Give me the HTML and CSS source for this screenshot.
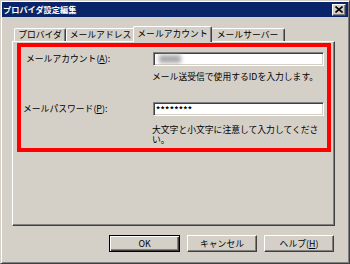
FILE: index.html
```html
<!DOCTYPE html>
<html lang="ja">
<head>
<meta charset="utf-8">
<title>プロバイダ設定編集</title>
<link rel="stylesheet" href="styles.css">
</head>
<body>
<div class="window">
  <div class="titlebar">
    <span class="title">プロバイダ設定編集</span>
    <span class="close">
      <svg width="8" height="7" viewBox="0 0 8 7"><path d="M0.5 0.5 L7.5 6.5 M7.5 0.5 L0.5 6.5" stroke="#000" stroke-width="1.6" fill="none"/></svg>
    </span>
  </div>
  <div class="content">
    <div class="tabs">
      <div class="tab t1">プロバイダ</div>
      <div class="tab t2">メールアドレス</div>
      <div class="tab t3 active">メールアカウント</div>
      <div class="tab t4">メールサーバー</div>
    </div>
    <div class="panel">
      <div class="highlight">
        <div class="row row1">
          <span class="label l1">メールアカウント(<u>A</u>):</span>
          <span class="input"><span class="blurred"></span></span>
        </div>
        <div class="hint hint1">メール送受信で使用するIDを入力します。</div>
        <div class="row row2">
          <span class="label l2">メールパスワード(<u>P</u>):</span>
          <span class="input pw">********</span>
        </div>
        <div class="hint hint2">大文字と小文字に注意して入力してください。</div>
      </div>
    </div>
    <div class="buttons">
      <div class="btn default"><span>OK</span></div>
      <div class="btn"><span>キャンセル</span></div>
      <div class="btn"><span>ヘルプ(<u>H</u>)</span></div>
    </div>
  </div>
</div>
</body>
</html>
```
FILE: styles.css
```css
html, body {
  margin: 0;
  padding: 0;
  background: #d4d0c8;
}
body {
  font-family: "Noto Sans CJK JP", "Noto Sans", sans-serif;
  font-size: 8.8px;
  color: #000;
}
.window {
  width: 350px;
  height: 264px;
  box-sizing: border-box;
  background: #d4d0c8;
  border-top: 1px solid #d4d0c8;
  border-left: 1px solid #d4d0c8;
  border-right: 1px solid #404040;
  border-bottom: 1px solid #404040;
  box-shadow: inset 1px 1px #fff, inset -1px -1px #808080;
  padding: 1px;
  display: flex;
  flex-direction: column;
}
.titlebar {
  height: 15px;
  background: #0a246a;
  display: flex;
  align-items: center;
  justify-content: space-between;
  padding: 0 2px 0 1px;
}
.title {
  color: #fff;
  font-weight: bold;
  font-size: 8.2px;
  line-height: 15px;
  letter-spacing: 0;
}
.close {
  width: 14px;
  height: 12px;
  box-sizing: border-box;
  background: #d4d0c8;
  border-top: 1px solid #fff;
  border-left: 1px solid #fff;
  border-right: 1px solid #404040;
  border-bottom: 1px solid #404040;
  box-shadow: inset -1px -1px #808080;
  display: flex;
  align-items: center;
  justify-content: center;
}
.close svg { display: block; margin: 0 1px 1px 0; }
.content {
  padding: 9px 13px 0 10px;
  display: flex;
  flex-direction: column;
}
.tabs {
  display: flex;
  align-items: flex-end;
  height: 15px;
  padding-left: 2px;
  position: relative;
  z-index: 1;
}
.tab {
  height: 13px;
  box-sizing: border-box;
  border-top: 1px solid #fff;
  border-left: 1px solid #fff;
  border-right: 1px solid #404040;
  box-shadow: inset -1px 0 #808080;
  border-radius: 2px 2px 0 0;
  text-align: center;
  line-height: 12px;
  white-space: nowrap;
  background: #d4d0c8;
}
.t1 { width: 52px; }
.t2 { width: 69px; }
.t4 { width: 75px; }
.tab.active {
  width: 79px;
  height: 16px;
  margin: 0 -2px -1px;
  line-height: 13px;
  position: relative;
  z-index: 2;
  padding-bottom: 2px;
}
.panel {
  height: 185px;
  box-sizing: border-box;
  border-top: 1px solid #fff;
  border-left: 1px solid #fff;
  border-right: 1px solid #404040;
  border-bottom: 1px solid #404040;
  box-shadow: inset -1px -1px #808080;
}
.highlight {
  width: 314px;
  height: 109px;
  box-sizing: border-box;
  margin: 1px 0 0 4px;
  border: 4px solid #ff0000;
  display: flex;
  flex-direction: column;
}
.row {
  display: flex;
  align-items: center;
  height: 14px;
}
.row1 { margin-top: 5px; }
.row2 { margin-top: 20px; }
.label {
  width: 132px;
  box-sizing: border-box;
  white-space: nowrap;
  line-height: 12px;
}
.l1 { padding-left: 5px; }
.l2 { padding-left: 2px; }
.input {
  width: 171px;
  height: 14px;
  box-sizing: border-box;
  background: #fff;
  border-top: 1px solid #808080;
  border-left: 1px solid #808080;
  border-right: 1px solid #fff;
  border-bottom: 1px solid #fff;
  box-shadow: inset 1px 1px #404040, inset -1px -1px #d4d0c8;
  display: flex;
  align-items: center;
  padding-left: 2px;
  overflow: hidden;
}
.blurred {
  width: 22px;
  height: 8px;
  margin-left: 3px;
  background: #a8a8a8;
  filter: blur(2px);
}
.pw {
  font-weight: bold;
  font-size: 8.4px;
  letter-spacing: 0.3px;
  line-height: 12px;
}
.hint {
  margin-left: 131px;
  width: 171px;
  line-height: 10px;
}
.hint1 { margin-top: 6px; }
.hint2 { margin-top: 9px; }
.buttons {
  margin-top: 9px;
  display: flex;
  justify-content: flex-end;
  gap: 7px;
  margin-right: 1px;
}
.btn {
  width: 70px;
  height: 17px;
  box-sizing: border-box;
  border-top: 1px solid #fff;
  border-left: 1px solid #fff;
  border-right: 1px solid #404040;
  border-bottom: 1px solid #404040;
  box-shadow: inset -1px -1px #808080;
  display: flex;
  align-items: center;
  justify-content: center;
  line-height: 12px;
}
.btn.default {
  border: 1px solid #000;
  box-shadow: inset 1px 1px #fff, inset -1px -1px #404040, inset -2px -2px #808080;
  width: 71px;
}
u { text-decoration: underline; }
```
